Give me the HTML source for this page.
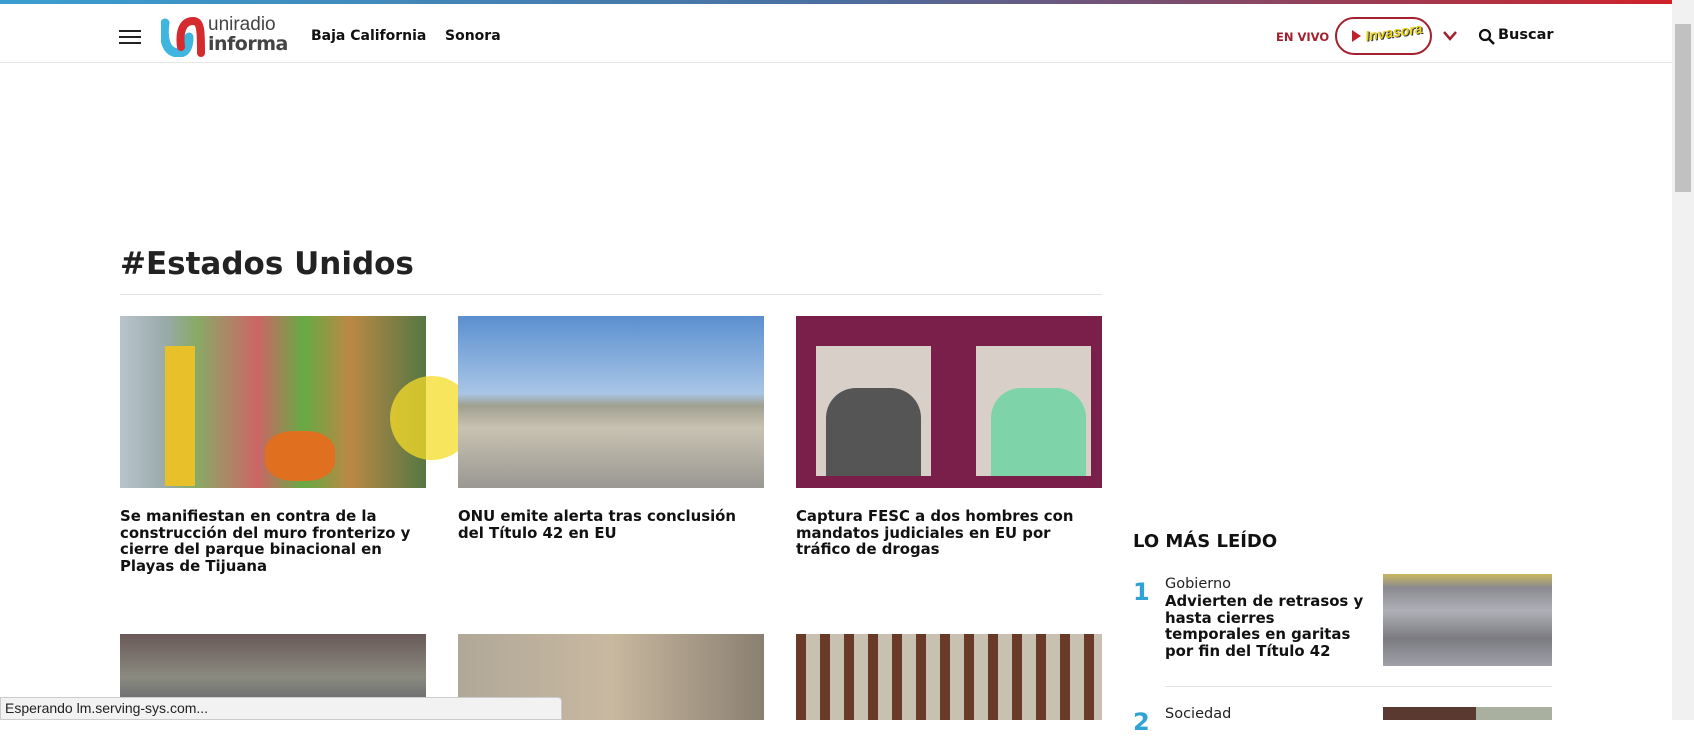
<!DOCTYPE html>
<html><head><meta charset="utf-8"><style>
*{margin:0;padding:0;box-sizing:border-box}
body{width:1694px;height:720px;overflow:hidden;background:#fff;font-family:"DejaVu Sans","Liberation Sans",sans-serif;color:#111;position:relative}
.a{position:absolute}
.top{left:0;top:0;width:1672px;height:4px;background:linear-gradient(90deg,#3a9fd0,#4a6fa0 50%,#7a4d6e 70%,#d0222a)}
.hdr{left:0;top:62px;width:1672px;height:1px;background:#e6e6e6}
.nav{font-weight:bold;font-size:14px}
.t{font-weight:bold;font-size:14.9px;line-height:16.5px;color:#111}
.img{overflow:hidden}
</style></head><body>
<div class="a top"></div>
<div class="a" style="left:119px;top:30px;width:22px;height:2px;background:#222;box-shadow:0 6px 0 #222,0 12px 0 #222"></div>
<svg class="a" style="left:161px;top:17px" width="44" height="40" viewBox="0 0 44 40"><path d="M4 6 C2 20 4 36 18 36 C26 36 28 28 28 20" stroke="#3fb6e0" stroke-width="9" fill="none" stroke-linecap="round"/><path d="M20 30 C18 14 22 4 32 4 C40 4 40 14 40 36" stroke="#d52a2e" stroke-width="8" fill="none" stroke-linecap="round"/></svg>
<div class="a" style="left:208px;top:15px;font-family:'Liberation Sans',sans-serif;font-size:19px;color:#444;line-height:20px">uniradio</div>
<div class="a" style="left:208px;top:34px;font-size:19px;font-weight:bold;color:#444;line-height:20px;letter-spacing:-0.5px">informa</div>
<div class="a nav" style="left:311px;top:28px">Baja California</div>
<div class="a nav" style="left:445px;top:28px">Sonora</div>
<div class="a" style="left:1276px;top:30px;font-size:11.5px;font-weight:bold;color:#a3202e">EN VIVO</div>
<div class="a" style="left:1335px;top:17px;width:97px;height:38px;border:2px solid #a3202e;border-radius:19px"></div>
<div class="a" style="left:1352px;top:30px;width:0;height:0;border-left:9px solid #c0202e;border-top:6px solid transparent;border-bottom:6px solid transparent"></div>
<div class="a" style="left:1365px;top:24px;font-family:'Liberation Sans',sans-serif;font-size:14px;font-weight:bold;font-style:italic;color:#e8d020;text-shadow:1px 1px 0 #333;transform:rotate(-8deg)">Invasora</div>
<svg class="a" style="left:1442px;top:30px" width="16" height="12"><path d="M2 2 L8 9 L14 2" stroke="#a3202e" stroke-width="2.5" fill="none"/></svg>
<svg class="a" style="left:1478px;top:28px" width="18" height="18"><circle cx="7" cy="7" r="5" stroke="#111" stroke-width="2.2" fill="none"/><path d="M11 11 L16 16" stroke="#111" stroke-width="2.5"/></svg>
<div class="a" style="left:1498px;top:27px;font-size:14.5px;font-weight:bold">Buscar</div>
<div class="a hdr"></div>
<div class="a" style="left:1672px;top:0;width:22px;height:720px;background:#f1f1f1"></div>
<div class="a" style="left:1675px;top:24px;width:16px;height:168px;background:#c1c1c1"></div>
<div class="a" style="left:120px;top:246px;font-size:31px;font-weight:bold;color:#222">#Estados Unidos</div>
<div class="a" style="left:120px;top:294px;width:982px;height:1px;background:#e4e4e4"></div>
<div class="a img" style="left:120px;top:316px;width:306px;height:172px;background:linear-gradient(90deg,#b9c4cc 0,#9aa 15%,#8a6 25%,#c66 45%,#6a4 60%,#b84 75%,#574 100%)"><div class="a" style="left:45px;top:30px;width:30px;height:140px;background:#e8c02a"></div><div class="a" style="left:145px;top:115px;width:70px;height:50px;background:#e07020;border-radius:40%"></div></div>
<div class="a" style="left:390px;top:376px;width:84px;height:84px;border-radius:50%;background:rgba(245,220,40,.75)"></div>
<div class="a img" style="left:458px;top:316px;width:306px;height:172px;background:linear-gradient(180deg,#5b8fcf 0,#a8c6e6 45%,#a0a090 52%,#c8c2b2 65%,#9a9892 100%)"></div>
<div class="a img" style="left:796px;top:316px;width:306px;height:172px;background:#7a1e4a"><div class="a" style="left:20px;top:30px;width:115px;height:130px;background:#d8d0c8"></div><div class="a" style="left:180px;top:30px;width:115px;height:130px;background:#d8d0c8"></div><div class="a" style="left:30px;top:72px;width:95px;height:88px;background:#555;border-radius:30px 30px 0 0"></div><div class="a" style="left:195px;top:72px;width:95px;height:88px;background:#7ed4a8;border-radius:30px 30px 0 0"></div></div>
<div class="a t" style="left:120px;top:508px;width:306px">Se manifiestan en contra de la construcción del muro fronterizo y cierre del parque binacional en Playas de Tijuana</div>
<div class="a t" style="left:458px;top:508px;width:306px">ONU emite alerta tras conclusión del Título 42 en EU</div>
<div class="a t" style="left:796px;top:508px;width:300px">Captura FESC a dos hombres con mandatos judiciales en EU por tráfico de drogas</div>
<div class="a" style="left:120px;top:634px;width:306px;height:86px;background:linear-gradient(180deg,#6a5a58,#8a8a80 50%,#556 100%)"></div>
<div class="a" style="left:458px;top:634px;width:306px;height:86px;background:linear-gradient(90deg,#b0a898,#c8b8a0 50%,#8a8070)"></div>
<div class="a" style="left:796px;top:634px;width:306px;height:86px;background:repeating-linear-gradient(90deg,#6a3a28 0 10px,#c8c0b0 10px 24px)"></div>
<div class="a" style="left:1133px;top:531px;font-size:18px;font-weight:bold;color:#111">LO MÁS LEÍDO</div>
<div class="a" style="left:1133px;top:578px;font-size:24px;font-weight:bold;color:#2fa3d6">1</div>
<div class="a" style="left:1165px;top:576px;font-size:14.5px;color:#222">Gobierno</div>
<div class="a t" style="left:1165px;top:593px;width:205px;font-size:14.9px;line-height:16.5px">Advierten de retrasos y hasta cierres temporales en garitas por fin del Título 42</div>
<div class="a" style="left:1383px;top:574px;width:169px;height:92px;background:linear-gradient(180deg,#c8b860 0,#8a8a90 15%,#b0b0b8 40%,#7a7a80 70%,#a0a0a8 100%)"></div>
<div class="a" style="left:1165px;top:686px;width:387px;height:1px;background:#e4e4e4"></div>
<div class="a" style="left:1133px;top:708px;font-size:24px;font-weight:bold;color:#2fa3d6">2</div>
<div class="a" style="left:1165px;top:706px;font-size:14.5px;color:#222">Sociedad</div>
<div class="a" style="left:1383px;top:707px;width:169px;height:13px;background:linear-gradient(90deg,#5a3a30 55%,#aab0a0 55%)"></div>
<div class="a" style="left:0;top:697px;width:562px;height:23px;background:#f2f2f2;border:1px solid #ccc;border-radius:0 4px 0 0;font-family:'Liberation Sans',sans-serif;font-size:14px;line-height:21px;padding-left:4px;color:#222">Esperando lm.serving-sys.com...</div>
</body></html>
